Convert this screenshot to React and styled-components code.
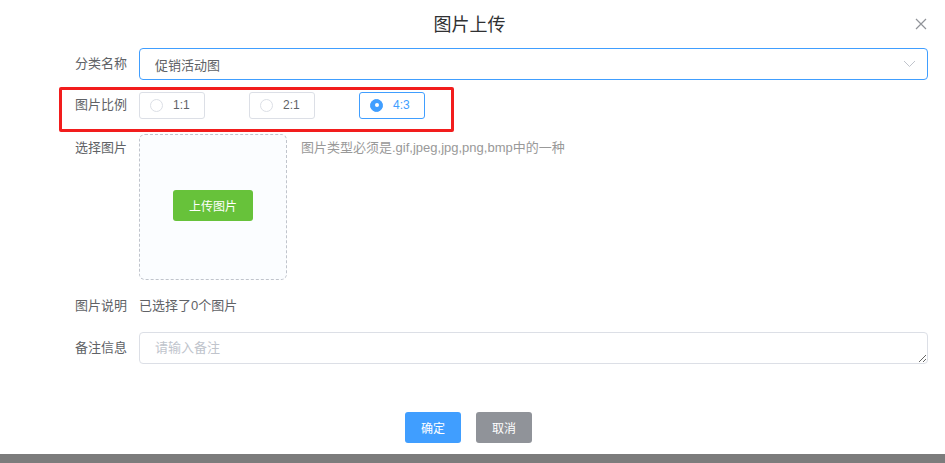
import React, { useState } from 'react'
import styled, { createGlobalStyle } from 'styled-components'

const GlobalStyle = createGlobalStyle`
  html, body {
    margin: 0;
    padding: 0;
    background: #7c7c7c;
    font-family: "Liberation Sans", "Noto Sans CJK SC", sans-serif;
  }
`

const Dialog = styled.div`
  width: 945px;
  height: 454px;
  background: #fff;
  box-sizing: border-box;
  display: flex;
  flex-direction: column;
  box-shadow: 0 1px 3px rgba(0, 0, 0, 0.3);
`

const Header = styled.div`
  position: relative;
  height: 48px;
  display: flex;
  justify-content: center;
  padding-top: 13px;
  padding-right: 6px;
  box-sizing: border-box;
`

const Title = styled.span`
  font-size: 18px;
  line-height: 24px;
  color: #303133;
`

const CloseBtn = styled.button`
  position: absolute;
  right: 18px;
  top: 18px;
  width: 12px;
  height: 12px;
  padding: 0;
  border: none;
  background: none;
  display: flex;
  cursor: pointer;
`

const Form = styled.div`
  display: flex;
  flex-direction: column;
  padding: 0 17px 0 60px;
`

const Row = styled.div`
  position: relative;
  display: flex;
  align-items: ${p => (p.$top ? 'flex-start' : 'center')};
  margin-top: ${p => p.$mt || 0}px;
`

// red outline drawn over the ratio row
const Marked = styled(Row)`
  &::after {
    content: '';
    position: absolute;
    left: -1px;
    width: 395px;
    top: -4px;
    bottom: -13px;
    border: 3px solid #f21d1d;
    border-radius: 2px;
    box-sizing: border-box;
    pointer-events: none;
  }
`

const Label = styled.label`
  width: 79px;
  flex-shrink: 0;
  padding-right: 12px;
  box-sizing: border-box;
  text-align: right;
  font-size: 13px;
  line-height: 28px;
  color: #606266;
`

const SelectBox = styled.div`
  flex: 1;
  height: 32px;
  box-sizing: border-box;
  border: 1px solid #409eff;
  border-radius: 4px;
  display: flex;
  align-items: center;
  justify-content: space-between;
  padding: 0 11px 0 15px;
  font-size: 13px;
  color: #606266;
`

const RadioGroup = styled.div`
  display: flex;
  gap: 44px;
`

const RadioButton = styled.label`
  width: 66px;
  height: 27px;
  box-sizing: border-box;
  border: 1px solid ${p => (p.$checked ? '#409eff' : '#dcdfe6')};
  border-radius: 3px;
  display: flex;
  align-items: center;
  padding-left: 10px;
  gap: 10px;
  font-size: 12px;
  color: ${p => (p.$checked ? '#409eff' : '#606266')};
  cursor: pointer;
`

const Dot = styled.span`
  width: 13px;
  height: 13px;
  box-sizing: border-box;
  border-radius: 50%;
  border: 1px solid ${p => (p.$checked ? '#409eff' : '#dcdfe6')};
  background: ${p => (p.$checked ? '#409eff' : '#fff')};
  display: flex;
  align-items: center;
  justify-content: center;

  &::after {
    content: '';
    width: 4px;
    height: 4px;
    border-radius: 50%;
    background: #fff;
  }
`

const UploadBox = styled.div`
  width: 148px;
  height: 146px;
  box-sizing: border-box;
  border: 1px dashed #c0c4cc;
  border-radius: 6px;
  background: #fbfdff;
  display: flex;
  align-items: center;
  justify-content: center;
  padding-bottom: 3px;
`

const Button = styled.button`
  width: ${p => p.$w || 56}px;
  height: 31px;
  border: none;
  border-radius: 3px;
  background: ${p => p.$bg};
  color: #fff;
  font-family: inherit;
  font-size: 12px;
  padding: 0;
  cursor: pointer;
`

const Hint = styled.span`
  margin-left: 14px;
  font-size: 13px;
  line-height: 28px;
  color: #999;
`

const Text = styled.span`
  font-size: 13px;
  line-height: 28px;
  color: #606266;
`

const TextArea = styled.textarea`
  flex: 1;
  height: 32px;
  box-sizing: border-box;
  border: 1px solid #dcdfe6;
  border-radius: 4px;
  padding: 6px 15px;
  font-family: inherit;
  font-size: 13px;
  line-height: 18px;
  color: #606266;
  outline: none;

  &::placeholder {
    color: #c0c4cc;
  }
`

const Footer = styled.div`
  display: flex;
  justify-content: center;
  gap: 15px;
  margin-top: 48px;
  padding-right: 8px;
`

const ratios = ['1:1', '2:1', '4:3']

export default function App() {
  const [ratio, setRatio] = useState('4:3')

  return (
    <>
      <GlobalStyle />
      <Dialog>
        <Header>
          <Title>图片上传</Title>
          <CloseBtn aria-label="close">
            <svg width="12" height="12" viewBox="0 0 12 12">
              <path d="M1 1L11 11M11 1L1 11" stroke="#909399" strokeWidth="1.2" />
            </svg>
          </CloseBtn>
        </Header>
        <Form>
          <Row>
            <Label>分类名称</Label>
            <SelectBox>
              促销活动图
              <svg width="13" height="8" viewBox="0 0 13 8">
                <path d="M1 1L6.5 6.5L12 1" fill="none" stroke="#c0c4cc" strokeWidth="1" />
              </svg>
            </SelectBox>
          </Row>
          <Marked $mt={11}>
            <Label>图片比例</Label>
            <RadioGroup>
              {ratios.map(r => (
                <RadioButton key={r} $checked={ratio === r} onClick={() => setRatio(r)}>
                  <Dot $checked={ratio === r} />
                  {r}
                </RadioButton>
              ))}
            </RadioGroup>
          </Marked>
          <Row $top $mt={15}>
            <Label>选择图片</Label>
            <UploadBox>
              <Button $w={80} $bg="#67c23a">上传图片</Button>
            </UploadBox>
            <Hint>图片类型必须是.gif,jpeg,jpg,png,bmp中的一种</Hint>
          </Row>
          <Row $mt={12}>
            <Label>图片说明</Label>
            <Text>已选择了0个图片</Text>
          </Row>
          <Row $mt={12}>
            <Label>备注信息</Label>
            <TextArea placeholder="请输入备注" />
          </Row>
        </Form>
        <Footer>
          <Button $bg="#409eff">确定</Button>
          <Button $bg="#909399">取消</Button>
        </Footer>
      </Dialog>
    </>
  )
}
